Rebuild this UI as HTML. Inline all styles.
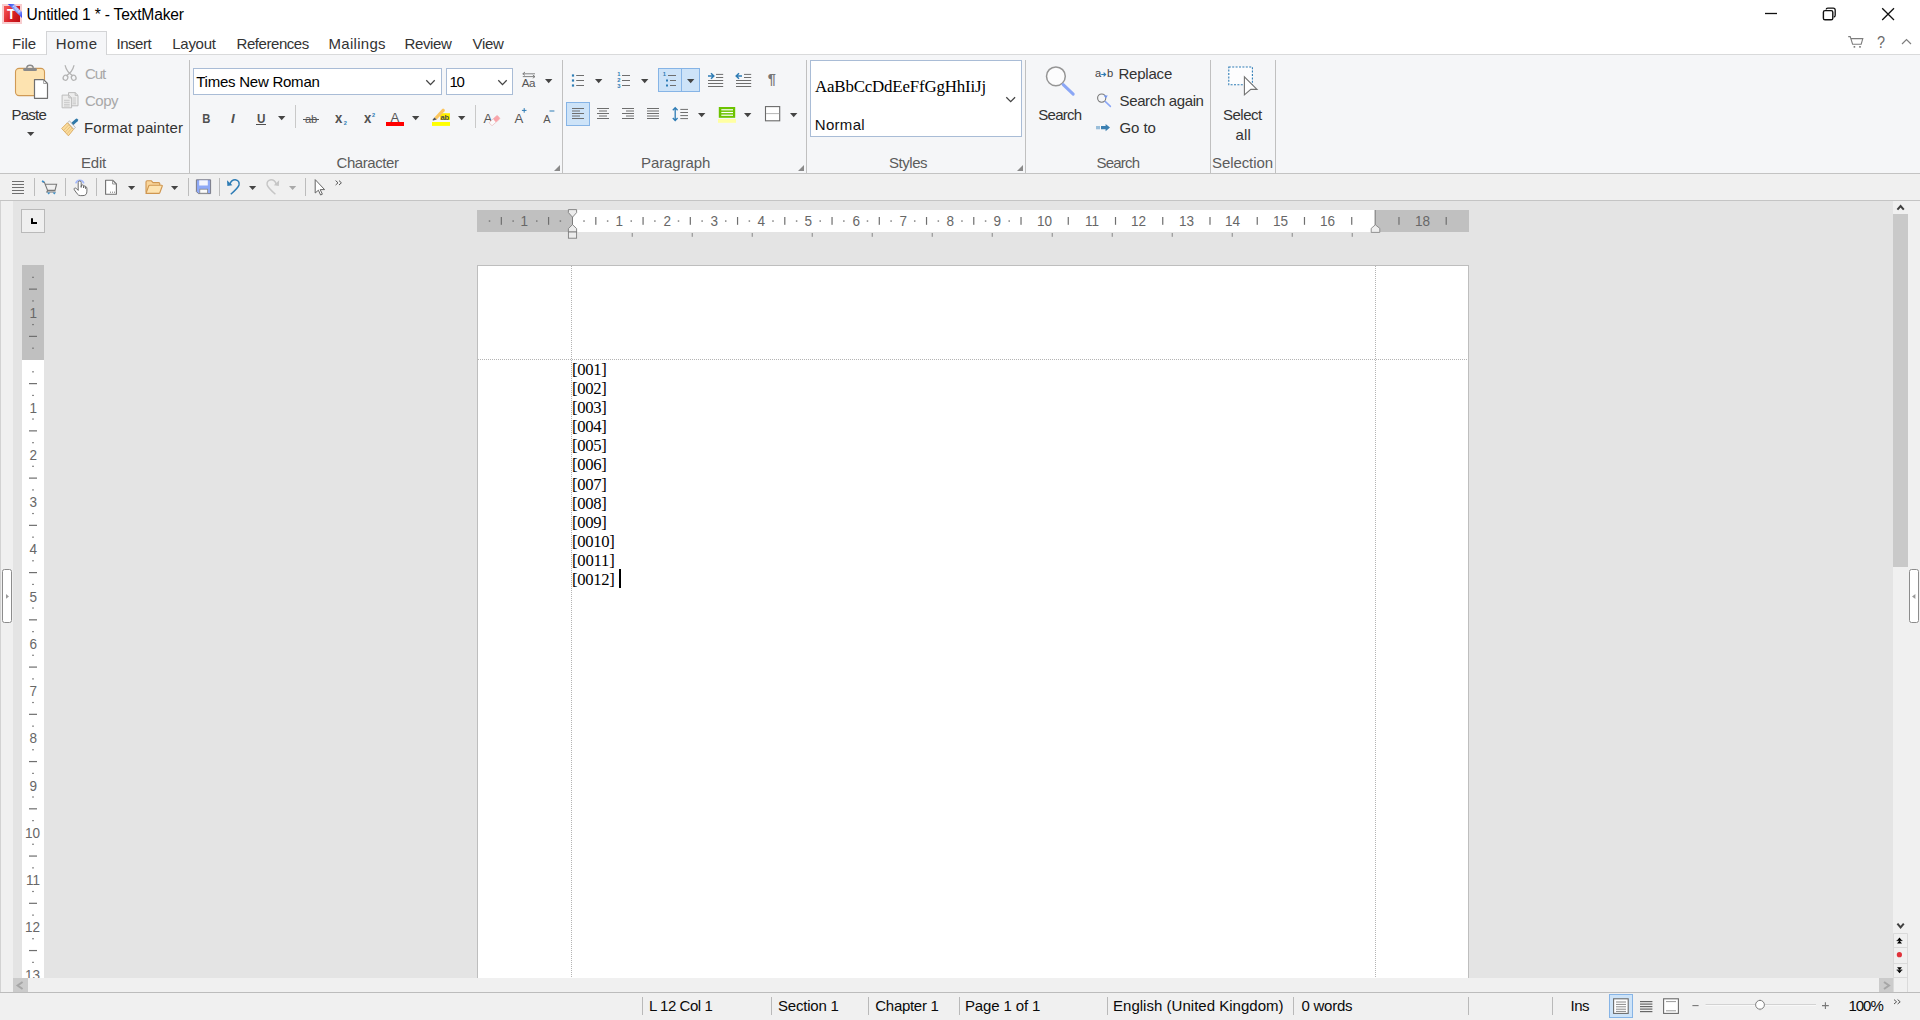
<!DOCTYPE html>
<html lang="en">
<head>
<meta charset="utf-8">
<title>Untitled 1 * - TextMaker</title>
<style>
html,body{margin:0;padding:0;background:#fff;overflow:hidden}
body{width:1920px;height:1020px;font-family:"Liberation Sans",sans-serif;font-size:14.67px;color:#333}
#app{position:relative;width:1920px;height:1020px;overflow:hidden;background:#fff}
#app div,#app svg,#app span,#app p{position:absolute;box-sizing:border-box;margin:0}
#app div{overflow:visible}
.t{line-height:0;white-space:pre;display:block}
.ic{overflow:visible}
.vs{background:#c9c9c9;width:1px}
.hl{background:#cde3f8;border:1px solid #86b4e6}
.combo{background:#fff;border:1px solid #a9bcd6}

</style>
</head>
<body>
<div id="app">
<div id="titlebar" style="left:0px;top:0px;width:1920px;height:31px;background:#fff">
<span class="t" style="left:26.6px;top:15px;font-size:15.6px;color:#000;letter-spacing:-0.194px;">Untitled 1 * - TextMaker</span>
<svg class="ic" style="left:1760px;top:4px" width="24" height="20" viewBox="0 0 24 20"><path d="M5 9.5H17" stroke="#111" stroke-width="1.3" fill="none"/></svg>
<svg class="ic" style="left:1818px;top:4px" width="24" height="20" viewBox="0 0 24 20"><path d="M8.2 5.2V5.6Q8.2 4.2 9.8 4.2H15.2Q17.2 4.2 17.2 6.2V11.2Q17.2 13 15.8 13" stroke="#111" stroke-width="1.3" fill="none"/><rect x="5.4" y="6.6" width="9.4" height="9.2" rx="1.6" stroke="#111" stroke-width="1.4" fill="none"/></svg>
<svg class="ic" style="left:1878px;top:4px" width="24" height="20" viewBox="0 0 24 20"><path d="M4.2 4.2L16 16M16 4.2L4.2 16" stroke="#111" stroke-width="1.3" fill="none"/></svg>
<svg class="ic" style="left:2px;top:4px" width="20" height="20" viewBox="0 0 20 20"><defs><linearGradient id="lgR" x1="0" y1="0.2" x2="1" y2="0.8"><stop offset="0" stop-color="#f55252"/><stop offset="0.55" stop-color="#d82127"/><stop offset="1" stop-color="#c01015"/></linearGradient>
<linearGradient id="lgB" x1="0" y1="0" x2="1" y2="1"><stop offset="0" stop-color="#2234ee"/><stop offset="0.3" stop-color="#7b93f8"/><stop offset="0.7" stop-color="#8aa0f9"/><stop offset="1" stop-color="#1e2df0"/></linearGradient>
<clipPath id="cpI"><rect x="0" y="0" width="20" height="20"/></clipPath></defs>
<rect x="0" y="0" width="20" height="20" fill="#f8cdcf"/><rect x="2" y="2" width="16" height="16" fill="url(#lgR)"/>
<text x="4.9" y="15" font-family="'Liberation Sans', sans-serif" font-weight="700" font-size="13.8" fill="#fff">T</text>
<g clip-path="url(#cpI)"><path d="M5.9 0H11.8L20 7.9V14.1Z" fill="url(#lgB)"/><text transform="translate(10.2 2.4) rotate(44)" font-family="'Liberation Sans', sans-serif" font-weight="700" font-size="3.4" fill="#e6ebff" letter-spacing="0.15">FREE</text></g></svg>
</div>
<div id="menubar" style="left:0px;top:31px;width:1920px;height:24px;background:#fff;border-bottom:1px solid #d9dadb">
<div class="tab-active" style="left:46px;top:0px;width:61px;height:24px;background:#f5f6f8;border:1px solid #d3d4d6;border-bottom:none"></div>
<span class="t" style="left:12px;top:13px;font-size:15.0px;color:#333;letter-spacing:-0.026px;">File</span>
<span class="t" style="left:55.75px;top:13px;font-size:15.0px;color:#333;letter-spacing:0.443px;">Home</span>
<span class="t" style="left:116.5px;top:13px;font-size:15.0px;color:#333;letter-spacing:-0.469px;">Insert</span>
<span class="t" style="left:172.25px;top:13px;font-size:15.0px;color:#333;letter-spacing:-0.274px;">Layout</span>
<span class="t" style="left:236.5px;top:13px;font-size:15.0px;color:#333;letter-spacing:-0.44px;">References</span>
<span class="t" style="left:328.5px;top:13px;font-size:15.0px;color:#333;letter-spacing:0.283px;">Mailings</span>
<span class="t" style="left:404.5px;top:13px;font-size:15.0px;color:#333;letter-spacing:-0.37px;">Review</span>
<span class="t" style="left:472.5px;top:13px;font-size:15.0px;color:#333;letter-spacing:-0.303px;">View</span>
<svg class="ic" style="left:0;top:0" width="1920" height="24" viewBox="0 31 1920 24"><path d="M1848.2 36.6H1850.2L1852.6 44.2H1861.2L1862.8 38.6H1851" fill="none" stroke="#7d7d7d" stroke-width="1.1"/><rect x="1853.6" y="46" width="1.6" height="1.7" fill="#7d7d7d"/><rect x="1859.2" y="46" width="1.6" height="1.7" fill="#7d7d7d"/><path d="M1902 44L1906.5 39.6L1911 44" fill="none" stroke="#7d7d7d" stroke-width="1.2"/></svg>
<span class="t" style="left:1877.4px;top:12px;font-size:16px;color:#6a6a6a;transform:scaleX(.9);transform-origin:1px 0;">?</span>
</div>
<div id="ribbon" style="left:0px;top:55px;width:1920px;height:119px;background:#f5f6f8;border-bottom:1px solid #c3c3c3">
<div style="left:189px;top:4.5px;width:1px;height:113.5px;background:#c0c0c0"></div>
<div style="left:562px;top:4.5px;width:1px;height:113.5px;background:#c0c0c0"></div>
<div style="left:806px;top:4.5px;width:1px;height:113.5px;background:#c0c0c0"></div>
<div style="left:1025px;top:4.5px;width:1px;height:113.5px;background:#c0c0c0"></div>
<div style="left:1210px;top:4.5px;width:1px;height:113.5px;background:#c0c0c0"></div>
<div style="left:1275px;top:4.5px;width:1px;height:113.5px;background:#c0c0c0"></div>
<span class="t" style="left:81px;top:108px;font-size:15.0px;color:#5c5c5c;letter-spacing:-0.227px;">Edit</span>
<span class="t" style="left:336.5px;top:108px;font-size:15.0px;color:#5c5c5c;letter-spacing:-0.421px;">Character</span>
<span class="t" style="left:641px;top:108px;font-size:15.0px;color:#5c5c5c;letter-spacing:-0.088px;">Paragraph</span>
<span class="t" style="left:889px;top:108px;font-size:15.0px;color:#5c5c5c;letter-spacing:-0.469px;">Styles</span>
<span class="t" style="left:1096.4px;top:108px;font-size:15.0px;color:#5c5c5c;letter-spacing:-0.757px;">Search</span>
<span class="t" style="left:1212px;top:108px;font-size:15.0px;color:#5c5c5c;letter-spacing:-0.083px;">Selection</span>
<span class="t" style="left:11.5px;top:60px;font-size:15.0px;color:#333;letter-spacing:-0.754px;">Paste</span>
<span class="t" style="left:85px;top:19px;font-size:15.0px;color:#a8a8a8;letter-spacing:-1.087px;">Cut</span>
<span class="t" style="left:85px;top:46px;font-size:15.0px;color:#a8a8a8;letter-spacing:-0.506px;">Copy</span>
<span class="t" style="left:84px;top:73px;font-size:15.0px;color:#333;letter-spacing:0.112px;">Format painter</span>
<div class="combo" style="left:193px;top:13px;width:249px;height:27px;"></div>
<span class="t" style="left:196.2px;top:27px;font-size:15.0px;color:#000;letter-spacing:-0.238px;">Times New Roman</span>
<div class="combo" style="left:446px;top:13px;width:67px;height:27px;"></div>
<span class="t" style="left:449.5px;top:27px;font-size:15.0px;color:#000;letter-spacing:-1.342px;">10</span>
<div class="combo" style="left:810px;top:5px;width:212px;height:77px;"></div>
<span class="t" style="left:815px;top:32px;font-size:16.9px;color:#000;letter-spacing:-0.18px;font-family:'Liberation Serif', serif;">AaBbCcDdEeFfGgHhIiJj</span>
<span class="t" style="left:814.8px;top:70px;font-size:15.0px;color:#111;letter-spacing:0.299px;">Normal</span>
<span class="t" style="left:1038.3px;top:60px;font-size:15.0px;color:#333;letter-spacing:-0.737px;">Search</span>
<span class="t" style="left:1118.5px;top:19px;font-size:15.0px;color:#333;letter-spacing:-0.215px;">Replace</span>
<span class="t" style="left:1119.5px;top:46px;font-size:15.0px;color:#333;letter-spacing:-0.359px;">Search again</span>
<span class="t" style="left:1119.5px;top:73px;font-size:15.0px;color:#333;letter-spacing:-0.086px;">Go to</span>
<span class="t" style="left:1223px;top:60px;font-size:15.0px;color:#333;letter-spacing:-0.504px;">Select</span>
<span class="t" style="left:1235.4px;top:80px;font-size:15.0px;color:#333;letter-spacing:0.213px;">all</span>
<svg class="ic" style="left:14px;top:8px" width="36" height="38" viewBox="0 0 36 38"><rect x="1.5" y="5.4" width="29" height="27.2" rx="3.6" fill="#fde3b0" stroke="#d09a55" stroke-width="1.1"/>
<path d="M12.6 4.9A3.45 3.3 0 0 1 19.4 4.9" fill="none" stroke="#8a8a8a" stroke-width="1.5"/>
<rect x="9.1" y="4.9" width="13.9" height="3" rx="1.5" fill="#8a8a8a"/>
<path d="M20.5 16.6H29.6L33.5 20.5V35.3H20.5Z" fill="#fff" stroke="#6f6f6f" stroke-width="1.2" stroke-linejoin="round"/>
<path d="M29.6 16.6V20.5H33.5" fill="none" stroke="#9a9a9a" stroke-width="0.9"/></svg>
<svg class="ic" style="left:26.8px;top:76.9px" width="7.4" height="4" viewBox="0 0 7.4 4"><path d="M0 0H7.4L3.7 4Z" fill="#444"/></svg>
<svg class="ic" style="left:61px;top:9px" width="18" height="18" viewBox="0 0 18 18"><g fill="none" stroke="#b3b3b3" stroke-width="1.25" stroke-linecap="round">
<path d="M4.2 1.7C5.2 6 8 9.4 11.4 11.6"/><path d="M12.9 1.7C11.9 6 9.1 9.4 5.7 11.6"/>
<ellipse cx="4.5" cy="13.7" rx="2.3" ry="2.6" transform="rotate(25 4.5 13.7)"/><ellipse cx="12.7" cy="13.7" rx="2.3" ry="2.6" transform="rotate(-25 12.7 13.7)"/></g></svg>
<svg class="ic" style="left:61px;top:36px" width="18" height="18" viewBox="0 0 18 18"><g stroke="#bcbcbc" stroke-width="1" fill="#ededed" stroke-linejoin="round">
<path d="M7.5 1.6H14.2L17 4.4V14.8H7.5Z"/><path d="M14.2 1.6V4.4H17" fill="none"/>
<path d="M1.1 4.1H7.8L10.6 6.9V16.8H1.1Z"/><path d="M7.8 4.1V6.9H10.6" fill="none"/></g>
<g stroke="#c4c4c4" stroke-width="0.9"><path d="M3 9.3H8.7M3 11.3H8.7M3 13.3H8.7M3 15H8.7M11.6 7H15M11.6 9H15M11.6 11H15M11.6 12.8H15"/></g></svg>
<svg class="ic" style="left:60px;top:63px" width="20" height="20" viewBox="0 0 20 20"><path d="M11.6 6.6L16.6 2.2" stroke="#2f78a8" stroke-width="3" stroke-linecap="round"/>
<path d="M7.6 4.7L13.6 11.2L15.4 9.4L9.5 2.9Z" fill="#f4f4f4" stroke="#a9a9a9" stroke-width="0.8"/>
<path d="M1.7 10.5L7.4 4.8L13.5 11.4L8.4 17.8Z" fill="#fbdd9e" stroke="#d8a75c" stroke-width="0.9" stroke-linejoin="round"/>
<path d="M3.6 12.3L8.9 6.7M5.3 14L10.5 8.4M6.9 15.8L12 10.1" stroke="#e2b873" stroke-width="0.8"/></svg>
<svg class="ic" style="left:426px;top:24.6px" width="9" height="5" viewBox="0 0 9 5"><path d="M0.3 0.3L4.5 4.6L8.7 0.3" fill="none" stroke="#444" stroke-width="1.3"/></svg>
<svg class="ic" style="left:497.5px;top:24.6px" width="9" height="5" viewBox="0 0 9 5"><path d="M0.3 0.3L4.5 4.6L8.7 0.3" fill="none" stroke="#444" stroke-width="1.3"/></svg>
<svg class="ic" style="left:521px;top:15px" width="18" height="18" viewBox="0 0 18 18"><path d="M1.8 3.8H14M1.8 3.8L4 2M1.8 3.8L4 5.4" stroke="#777" stroke-width="0.9" fill="none"/>
<path d="M1.8 6.6H14M14 6.6L11.8 5M14 6.6L11.8 8.2" stroke="#777" stroke-width="0.9" fill="none"/>
<text x="0.8" y="16.8" font-family="'Liberation Sans', sans-serif" font-size="11.6" fill="#555" letter-spacing="-0.5">Aa</text></svg>
<svg class="ic" style="left:544.8px;top:24px" width="7.4" height="4.2" viewBox="0 0 7.4 4.2"><path d="M0 0H7.4L3.7 4.2Z" fill="#444"/></svg>
<span class="t" style="left:201.7px;top:64px;font-size:13.4px;color:#505050;font-weight:700;transform:scaleX(.84);transform-origin:1px 0;">B</span>
<span class="t" style="left:231px;top:64px;font-size:13.4px;color:#505050;font-weight:700;font-style:italic;">I</span>
<span class="t" style="left:257px;top:64px;font-size:13px;color:#505050;font-weight:700;transform:scaleX(.9);transform-origin:1px 0;">U</span>
<div style="left:256px;top:68.8px;width:9.8px;height:1.1px;background:#505050"></div>
<svg class="ic" style="left:278px;top:61px" width="7.4" height="4.2" viewBox="0 0 7.4 4.2"><path d="M0 0H7.4L3.7 4.2Z" fill="#444"/></svg>
<div class="vs" style="left:295px;top:50px;width:1px;height:23px;"></div>
<span class="t" style="left:305px;top:64px;font-size:11.2px;color:#555;letter-spacing:-0.222px;">ab</span>
<div style="left:303px;top:64.4px;width:16px;height:1px;background:#555"></div>
<span class="t" style="left:335px;top:63px;font-size:14px;color:#505050;font-weight:700;transform:scaleX(.94);transform-origin:1px 0;">x</span>
<span class="t" style="left:343.8px;top:68px;font-size:5.6px;color:#2e7cb5;font-weight:700;">2</span>
<span class="t" style="left:363.5px;top:63px;font-size:14px;color:#505050;font-weight:700;transform:scaleX(.94);transform-origin:1px 0;">x</span>
<span class="t" style="left:372px;top:60px;font-size:5.6px;color:#2e7cb5;font-weight:700;">2</span>
<span class="t" style="left:390.4px;top:63px;font-size:13.2px;color:#555;">A</span>
<div style="left:386px;top:67px;width:18px;height:4px;background:#f00"></div>
<svg class="ic" style="left:412px;top:61px" width="7.4" height="4.2" viewBox="0 0 7.4 4.2"><path d="M0 0H7.4L3.7 4.2Z" fill="#444"/></svg>
<svg class="ic" style="left:431px;top:52px" width="20" height="20" viewBox="0 0 20 20"><rect x="9" y="6.2" width="10" height="6.8" fill="#ffee00"/>
<path d="M3.4 10.6L11.2 1.9Q12.1 1.1 13 1.9L13.6 2.5Q14.3 3.3 13.5 4.2L5.8 12.6Z" fill="#fcc65e"/>
<path d="M3.4 10.6L5.8 12.6L2.2 13.6L1.4 12.9Z" fill="#555"/>
<text x="9.6" y="12.6" font-family="'Liberation Sans', sans-serif" font-weight="700" font-size="7.6" fill="#4a4a4a" letter-spacing="-0.2">ab</text>
<rect x="1" y="15" width="18" height="3.9" fill="#ffff00"/></svg>
<svg class="ic" style="left:458px;top:61px" width="7.4" height="4.2" viewBox="0 0 7.4 4.2"><path d="M0 0H7.4L3.7 4.2Z" fill="#444"/></svg>
<div class="vs" style="left:475px;top:50px;width:1px;height:23px;"></div>
<span class="t" style="left:483.6px;top:64px;font-size:13.2px;color:#555;">A</span>
<svg class="ic" style="left:487px;top:58px" width="14" height="14" viewBox="0 0 14 14"><g transform="rotate(-42 7.5 7.5)"><rect x="2" y="5.4" width="11" height="4.4" rx="0.8" fill="#fbfbfb" stroke="#e7b3b6" stroke-width="0.6"/><rect x="7.4" y="5.4" width="5.6" height="4.4" rx="0.8" fill="#f9a4aa"/></g></svg>
<span class="t" style="left:514.5px;top:64px;font-size:13.2px;color:#555;">A</span>
<svg class="ic" style="left:520.6px;top:52.2px" width="7" height="7" viewBox="0 0 7 7"><path d="M0.9 3.4H5.5M3.2 1.1V5.7" stroke="#2e7cb5" stroke-width="1"/></svg>
<span class="t" style="left:543.2px;top:64px;font-size:11px;color:#555;">A</span>
<svg class="ic" style="left:548.6px;top:54.4px" width="6" height="4" viewBox="0 0 6 4"><path d="M0.5 2H5.4" stroke="#2e7cb5" stroke-width="1"/></svg>
<svg class="ic" style="left:554px;top:110px" width="6" height="6" viewBox="0 0 6 6"><path d="M6 0V6H0Z" fill="#8a8a8a"/></svg>
<svg class="ic" style="left:798px;top:110px" width="6" height="6" viewBox="0 0 6 6"><path d="M6 0V6H0Z" fill="#8a8a8a"/></svg>
<svg class="ic" style="left:1017px;top:110px" width="6" height="6" viewBox="0 0 6 6"><path d="M6 0V6H0Z" fill="#8a8a8a"/></svg>
<svg class="ic" style="left:0;top:0" width="1920" height="119" viewBox="0 55 1920 119"><rect x="571.9" y="74.4" width="2.2" height="2.2" fill="#2e7cb5"/><rect x="571.9" y="79.4" width="2.2" height="2.2" fill="#2e7cb5"/><rect x="571.9" y="84.4" width="2.2" height="2.2" fill="#2e7cb5"/><path d="M576.2 75.5H584" stroke="#6e6e6e" stroke-width="1"/><path d="M576.2 80.5H584" stroke="#6e6e6e" stroke-width="1"/><path d="M576.2 85.5H584" stroke="#6e6e6e" stroke-width="1"/><path d="M622 75.5H630" stroke="#6e6e6e" stroke-width="1"/><path d="M622 80.5H630" stroke="#6e6e6e" stroke-width="1"/><path d="M622 85.5H630" stroke="#6e6e6e" stroke-width="1"/></svg>
<span class="t" style="left:617.2px;top:19px;font-size:5.8px;color:#2e7cb5;font-weight:700;">1</span>
<span class="t" style="left:617.2px;top:25px;font-size:5.8px;color:#2e7cb5;font-weight:700;">2</span>
<span class="t" style="left:617.2px;top:31px;font-size:5.8px;color:#2e7cb5;font-weight:700;">3</span>
<svg class="ic" style="left:594.8px;top:23.8px" width="7.4" height="4.2" viewBox="0 0 7.4 4.2"><path d="M0 0H7.4L3.7 4.2Z" fill="#444"/></svg>
<svg class="ic" style="left:641px;top:23.8px" width="7.4" height="4.2" viewBox="0 0 7.4 4.2"><path d="M0 0H7.4L3.7 4.2Z" fill="#444"/></svg>
<div class="hl" style="left:658px;top:13px;width:42px;height:24.4px;"></div>
<div style="left:681px;top:13px;width:1px;height:24.4px;background:#86b4e6"></div>
<svg class="ic" style="left:0;top:0" width="1920" height="119" viewBox="0 55 1920 119"><path d="M668 75.5H676" stroke="#6e6e6e" stroke-width="1"/><path d="M670 80.5H676" stroke="#6e6e6e" stroke-width="1"/><path d="M670 85.5H676" stroke="#6e6e6e" stroke-width="1"/><rect x="666" y="79.5" width="2" height="2" fill="#2e7cb5"/><rect x="666" y="84.5" width="2" height="2" fill="#2e7cb5"/></svg>
<span class="t" style="left:662.8px;top:19px;font-size:5.8px;color:#2e7cb5;font-weight:700;">1</span>
<svg class="ic" style="left:686.7px;top:23.8px" width="7.4" height="4.2" viewBox="0 0 7.4 4.2"><path d="M0 0H7.4L3.7 4.2Z" fill="#444"/></svg>
<svg class="ic" style="left:0;top:0" width="1920" height="119" viewBox="0 55 1920 119"><path d="M716 74.4H723.2" stroke="#6e6e6e" stroke-width="1"/><path d="M716 77.5H723.2" stroke="#6e6e6e" stroke-width="1"/><path d="M708 80.5H723.2" stroke="#6e6e6e" stroke-width="1"/><path d="M708 83.5H723.2" stroke="#6e6e6e" stroke-width="1"/><path d="M708 86.5H723.2" stroke="#6e6e6e" stroke-width="1"/><path d="M708 76H713.6M711 73.3L713.8 76L711 78.7" stroke="#2e7cb5" stroke-width="1.5" fill="none"/><path d="M744 74.4H751.2" stroke="#6e6e6e" stroke-width="1"/><path d="M744 77.5H751.2" stroke="#6e6e6e" stroke-width="1"/><path d="M736 80.5H751.2" stroke="#6e6e6e" stroke-width="1"/><path d="M736 83.5H751.2" stroke="#6e6e6e" stroke-width="1"/><path d="M736 86.5H751.2" stroke="#6e6e6e" stroke-width="1"/><path d="M742 76H736.4M739 73.3L736.2 76L739 78.7" stroke="#2e7cb5" stroke-width="1.5" fill="none"/></svg>
<span class="t" style="left:767.8px;top:24px;font-size:14.6px;color:#777;font-weight:700;">¶</span>
<div class="hl" style="left:566px;top:47px;width:24.4px;height:23.8px;"></div>
<svg class="ic" style="left:0;top:0" width="1920" height="119" viewBox="0 55 1920 119"><path d="M572 108.5H584" stroke="#6e6e6e" stroke-width="1"/><path d="M572 111H580" stroke="#6e6e6e" stroke-width="1"/><path d="M572 113.5H584" stroke="#6e6e6e" stroke-width="1"/><path d="M572 116H580" stroke="#6e6e6e" stroke-width="1"/><path d="M572 118.5H584" stroke="#6e6e6e" stroke-width="1"/><path d="M597 108.5H609" stroke="#6e6e6e" stroke-width="1"/><path d="M599 111H607" stroke="#6e6e6e" stroke-width="1"/><path d="M597 113.5H609" stroke="#6e6e6e" stroke-width="1"/><path d="M599 116H607" stroke="#6e6e6e" stroke-width="1"/><path d="M597 118.5H609" stroke="#6e6e6e" stroke-width="1"/><path d="M622 108.5H634" stroke="#6e6e6e" stroke-width="1"/><path d="M626 111H634" stroke="#6e6e6e" stroke-width="1"/><path d="M622 113.5H634" stroke="#6e6e6e" stroke-width="1"/><path d="M626 116H634" stroke="#6e6e6e" stroke-width="1"/><path d="M622 118.5H634" stroke="#6e6e6e" stroke-width="1"/><path d="M647 108.5H659" stroke="#6e6e6e" stroke-width="1"/><path d="M647 111H659" stroke="#6e6e6e" stroke-width="1"/><path d="M647 113.5H659" stroke="#6e6e6e" stroke-width="1"/><path d="M647 116H659" stroke="#6e6e6e" stroke-width="1"/><path d="M647 118.5H659" stroke="#6e6e6e" stroke-width="1"/><path d="M680.3 109.4H688" stroke="#6e6e6e" stroke-width="1"/><path d="M680.3 112.5H688" stroke="#6e6e6e" stroke-width="1"/><path d="M680.3 115.6H688" stroke="#6e6e6e" stroke-width="1"/><path d="M680.3 118.6H688" stroke="#6e6e6e" stroke-width="1"/><path d="M675.2 108V120.2M672.8 110.2L675.2 107.6L677.6 110.2M672.8 118L675.2 120.6L677.6 118" stroke="#2e7cb5" stroke-width="1.3" fill="none"/><rect x="718.8" y="107" width="16.4" height="10.8" fill="#6cc300"/><path d="M721.3 109.8H733" stroke="#fff" stroke-width="1.2"/><path d="M721.3 112.5H733" stroke="#fff" stroke-width="1.2"/><path d="M721.3 115.2H733" stroke="#fff" stroke-width="1.2"/><rect x="718" y="119" width="18" height="3.8" fill="#ffffa2"/><rect x="765.5" y="106.6" width="14.2" height="14.2" fill="#fff" stroke="#6a6a6a" stroke-width="1.1"/><path d="M766 113.6H779.2" stroke="#b5b5b5" stroke-width="1"/></svg>
<svg class="ic" style="left:697.8px;top:57.8px" width="7.4" height="4.2" viewBox="0 0 7.4 4.2"><path d="M0 0H7.4L3.7 4.2Z" fill="#444"/></svg>
<svg class="ic" style="left:743.8px;top:57.8px" width="7.4" height="4.2" viewBox="0 0 7.4 4.2"><path d="M0 0H7.4L3.7 4.2Z" fill="#444"/></svg>
<svg class="ic" style="left:789.8px;top:57.8px" width="7.4" height="4.2" viewBox="0 0 7.4 4.2"><path d="M0 0H7.4L3.7 4.2Z" fill="#444"/></svg>
<svg class="ic" style="left:1006px;top:41.6px" width="9.4" height="5" viewBox="0 0 9.4 5"><path d="M0.3 0.3L4.7 4.6L9.1 0.3" fill="none" stroke="#444" stroke-width="1.3"/></svg>
<svg class="ic" style="left:0;top:0" width="1920" height="119" viewBox="0 55 1920 119"><circle cx="1055.9" cy="76.3" r="9.4" fill="#fcfcfd" stroke="#959595" stroke-width="1.5"/><path d="M1063.2 84.6L1073.2 94.2" stroke="#8ba7f6" stroke-width="3" stroke-linecap="round"/><path d="M1101.2 74.5H1105M1103.6 72.6L1105.6 74.5L1103.6 76.4" stroke="#2e7cb5" stroke-width="1.2" fill="none"/><circle cx="1101.7" cy="98.1" r="4.1" fill="none" stroke="#7a7a7a" stroke-width="1.1"/><path d="M1105.4 101.6L1110.4 106.4" stroke="#8ba7f6" stroke-width="1.5" stroke-linecap="round"/><path d="M1103.6 95.6H1107.8L1105.9 98.3Z" fill="#6f93f0"/><path d="M1097 126V129.3M1099 126V129.3" stroke="#2e7cb5" stroke-width="0.9"/><path d="M1101 126H1105.6V123.9L1110 127.6L1105.6 131.3V129.3H1101Z" fill="#3b80b2"/><rect x="1228.8" y="67" width="23.6" height="17.8" fill="#fdfdfe" stroke="#2e7cb5" stroke-width="1.1" stroke-dasharray="2 1.4"/><path d="M1244.4 76.8V94.8L1250.8 89.4H1257Z" fill="#fff" stroke="#727272" stroke-width="1.1" stroke-linejoin="miter"/></svg>
<span class="t" style="left:1095.1px;top:18px;font-size:11.2px;color:#444;">a</span>
<span class="t" style="left:1107px;top:18px;font-size:11.2px;color:#444;">b</span>
</div>
<div id="quickbar" style="left:0px;top:174px;width:1920px;height:27px;background:#f0f0f0;border-bottom:1px solid #c4c4c4">
<div style="left:34px;top:4px;width:1px;height:18px;background:#bcbcbc"></div>
<div style="left:65px;top:4px;width:1px;height:18px;background:#bcbcbc"></div>
<div style="left:96px;top:4px;width:1px;height:18px;background:#bcbcbc"></div>
<div style="left:188px;top:4px;width:1px;height:18px;background:#bcbcbc"></div>
<div style="left:219px;top:4px;width:1px;height:18px;background:#bcbcbc"></div>
<div style="left:305px;top:4px;width:1px;height:18px;background:#bcbcbc"></div>
<svg class="ic" style="left:0;top:0" width="1920" height="27" viewBox="0 174 1920 27"><path d="M12 181.5H24" stroke="#6f6f6f" stroke-width="1"/><path d="M12 184.5H24" stroke="#6f6f6f" stroke-width="1"/><path d="M12 187.5H24" stroke="#6f6f6f" stroke-width="1"/><path d="M12 190.5H24" stroke="#6f6f6f" stroke-width="1"/><path d="M12 193.5H24" stroke="#6f6f6f" stroke-width="1"/><path d="M42 181.4L44.4 182.4L47.6 190.4H55L56.6 184.2H45.4M47.6 190.4L46.8 192H55.6" fill="none" stroke="#777" stroke-width="1.1"/><path d="M42 181L44.2 182" stroke="#3a8ec9" stroke-width="1.4"/><path d="M47 192.6H50.4L48.7 194.6Z" fill="#3a8ec9"/><path d="M52.6 192.6H56L54.3 194.6Z" fill="#3a8ec9"/><path d="M75.8 183.4A4.1 4.1 0 0 1 83.8 183.4" fill="none" stroke="#a3b8fb" stroke-width="1.6"/><path d="M78.2 190.4V182.6Q78.2 181 79.7 181Q81.2 181 81.2 182.6V187.4V186.2Q81.2 184.9 82.5 184.9Q83.6 184.9 83.6 186.2V188V187Q83.6 185.9 84.7 185.9Q85.6 185.9 85.6 187V188.6Q85.6 187.2 86.3 187.2Q86.9 187.2 86.9 188.4V191.2Q86.9 195.6 83 195.6H80.4Q78.4 195.6 77.2 193.8L74.3 189.8Q73.7 188.6 74.7 188.1Q75.7 187.8 76.6 188.7Z" fill="#fff" stroke="#5f5f5f" stroke-width="0.9" stroke-linejoin="round"/><path d="M105.6 180.2H112.6L116.4 184V194.3H105.6Z" fill="#fff" stroke="#6f6f6f" stroke-width="1.1" stroke-linejoin="round"/><path d="M112.6 180.2V184H116.4" fill="none" stroke="#8a8a8a" stroke-width="0.9"/><path d="M110 192.2H110.9M112 192.2H112.9M114 192.2H114.9" stroke="#555" stroke-width="0.9"/><path d="M146 192.6V182Q146 180.8 147.2 180.8H151.4L153 182.6H158.6Q159.8 182.6 159.8 183.8V185.4" fill="#f9d59a" stroke="#cf9650" stroke-width="1.1" stroke-linejoin="round"/><path d="M146 193.4L148.8 185.8Q149.1 185.2 149.8 185.2H161.6Q162.6 185.2 162.2 186.2L159.8 192.8Q159.6 193.4 158.8 193.4Z" fill="#fde3b0" stroke="#cf9650" stroke-width="1.1" stroke-linejoin="round"/><path d="M196.4 179.8H210.6V193.6H198.4L196.4 191.6Z" fill="#8ea9f7" stroke="#7c7c86" stroke-width="1"/><rect x="199.2" y="180.3" width="8.6" height="5.2" fill="#f4f6fd"/><rect x="199.8" y="189.2" width="7.8" height="4" fill="#fafafa" stroke="#8a8a8a" stroke-width="0.8"/><path d="M229.8 184.4Q231.4 179.7 235.2 179.8Q239.8 180.4 239 185Q238.2 187.8 230.8 194.2" fill="none" stroke="#2e7cb5" stroke-width="1.5"/><path d="M227 180.3L227.4 186L232.4 185.3Z" fill="#2e7cb5"/><path d="M276.4 184.4Q274.8 179.7 271 179.8Q266.4 180.4 267.2 185Q268 187.8 275.4 194.2" fill="none" stroke="#c6c6c6" stroke-width="1.5"/><path d="M279.2 180.3L278.8 186L273.8 185.3Z" fill="#c6c6c6"/><path d="M315.2 179.6V193L318.4 190.2L320.6 195L322.4 194.2L320.2 189.6H324.6Z" fill="#fff" stroke="#666" stroke-width="1" stroke-linejoin="round"/><path d="M335.6 180.6L338 182.8L335.6 185M339 180.6L341.4 182.8L339 185" fill="none" stroke="#555" stroke-width="1"/></svg>
<svg class="ic" style="left:127.8px;top:12px" width="7.2" height="4.1" viewBox="0 0 7.2 4.1"><path d="M0 0H7.2L3.6 4.1Z" fill="#444"/></svg>
<svg class="ic" style="left:171px;top:12px" width="7.2" height="4.1" viewBox="0 0 7.2 4.1"><path d="M0 0H7.2L3.6 4.1Z" fill="#444"/></svg>
<svg class="ic" style="left:249.2px;top:12px" width="7.2" height="4.1" viewBox="0 0 7.2 4.1"><path d="M0 0H7.2L3.6 4.1Z" fill="#444"/></svg>
<svg class="ic" style="left:289px;top:12px" width="7.2" height="4.1" viewBox="0 0 7.2 4.1"><path d="M0 0H7.2L3.6 4.1Z" fill="#a9a9a9"/></svg>
</div>
<div id="workspace" style="left:0px;top:201px;width:1920px;height:777px;background:#e4e4e4;overflow:hidden">
<div style="left:0px;top:0px;width:13px;height:791px;background:#f0f0f0"></div>
<div style="left:0px;top:0px;width:1px;height:791px;background:#d2d2d2"></div>
<div style="left:1893px;top:0px;width:27px;height:777px;background:#f0f0f0"></div>
<div style="left:21px;top:8px;width:24px;height:24px;background:#efefef;border:1px solid #b9b9b9"></div>
<svg class="ic" style="left:21px;top:8px" width="24" height="24" viewBox="0 0 24 24"><path d="M11 9.2V14H16" stroke="#000" stroke-width="2" fill="none"/></svg>
<div class="hruler" style="left:477px;top:9px;width:992px;height:22px;background:#fff"></div>
<div style="left:477px;top:9px;width:95.5px;height:22px;background:#c0c0c0"></div>
<div style="left:1375px;top:9px;width:94px;height:22px;background:#c0c0c0"></div>
<div class="vruler" style="left:22px;top:64px;width:22px;height:713px;background:#fff"></div>
<div style="left:22px;top:64px;width:22px;height:95px;background:#c0c0c0"></div>
<div class="page" style="left:477px;top:64px;width:992px;height:720px;background:#fff;border:1px solid #bebebe"></div>
<svg class="ic" style="left:0;top:0" width="1920" height="777" viewBox="0 201 1920 777"><rect x="488.77" y="220.4" width="1.5" height="1.3" fill="#6f6f6f"/><rect x="500.73" y="217" width="1.2" height="7.8" fill="#6f6f6f"/><rect x="512.4" y="220.4" width="1.5" height="1.3" fill="#6f6f6f"/><rect x="536.02" y="220.4" width="1.5" height="1.3" fill="#6f6f6f"/><rect x="547.98" y="217" width="1.2" height="7.8" fill="#6f6f6f"/><rect x="559.64" y="220.4" width="1.5" height="1.3" fill="#6f6f6f"/><rect x="583.26" y="220.4" width="1.5" height="1.3" fill="#6f6f6f"/><rect x="595.22" y="217" width="1.2" height="7.8" fill="#6f6f6f"/><rect x="606.88" y="220.4" width="1.5" height="1.3" fill="#6f6f6f"/><rect x="630.5" y="220.4" width="1.5" height="1.3" fill="#6f6f6f"/><rect x="642.47" y="217" width="1.2" height="7.8" fill="#6f6f6f"/><rect x="654.13" y="220.4" width="1.5" height="1.3" fill="#6f6f6f"/><rect x="677.75" y="220.4" width="1.5" height="1.3" fill="#6f6f6f"/><rect x="689.71" y="217" width="1.2" height="7.8" fill="#6f6f6f"/><rect x="701.37" y="220.4" width="1.5" height="1.3" fill="#6f6f6f"/><rect x="724.99" y="220.4" width="1.5" height="1.3" fill="#6f6f6f"/><rect x="736.95" y="217" width="1.2" height="7.8" fill="#6f6f6f"/><rect x="748.62" y="220.4" width="1.5" height="1.3" fill="#6f6f6f"/><rect x="772.24" y="220.4" width="1.5" height="1.3" fill="#6f6f6f"/><rect x="784.2" y="217" width="1.2" height="7.8" fill="#6f6f6f"/><rect x="795.86" y="220.4" width="1.5" height="1.3" fill="#6f6f6f"/><rect x="819.48" y="220.4" width="1.5" height="1.3" fill="#6f6f6f"/><rect x="831.44" y="217" width="1.2" height="7.8" fill="#6f6f6f"/><rect x="843.1" y="220.4" width="1.5" height="1.3" fill="#6f6f6f"/><rect x="866.73" y="220.4" width="1.5" height="1.3" fill="#6f6f6f"/><rect x="878.69" y="217" width="1.2" height="7.8" fill="#6f6f6f"/><rect x="890.35" y="220.4" width="1.5" height="1.3" fill="#6f6f6f"/><rect x="913.97" y="220.4" width="1.5" height="1.3" fill="#6f6f6f"/><rect x="925.93" y="217" width="1.2" height="7.8" fill="#6f6f6f"/><rect x="937.59" y="220.4" width="1.5" height="1.3" fill="#6f6f6f"/><rect x="961.21" y="220.4" width="1.5" height="1.3" fill="#6f6f6f"/><rect x="973.17" y="217" width="1.2" height="7.8" fill="#6f6f6f"/><rect x="984.84" y="220.4" width="1.5" height="1.3" fill="#6f6f6f"/><rect x="1008.46" y="220.4" width="1.5" height="1.3" fill="#6f6f6f"/><rect x="1020.42" y="217" width="1.2" height="7.8" fill="#6f6f6f"/><rect x="1067.66" y="217" width="1.2" height="7.8" fill="#6f6f6f"/><rect x="1114.91" y="217" width="1.2" height="7.8" fill="#6f6f6f"/><rect x="1162.15" y="217" width="1.2" height="7.8" fill="#6f6f6f"/><rect x="1209.39" y="217" width="1.2" height="7.8" fill="#6f6f6f"/><rect x="1256.64" y="217" width="1.2" height="7.8" fill="#6f6f6f"/><rect x="1303.88" y="217" width="1.2" height="7.8" fill="#6f6f6f"/><rect x="1351.13" y="217" width="1.2" height="7.8" fill="#6f6f6f"/><rect x="1398.37" y="217" width="1.2" height="7.8" fill="#6f6f6f"/><rect x="1445.61" y="217" width="1.2" height="7.8" fill="#6f6f6f"/><rect x="631.7" y="233" width="1.1" height="3.8" fill="#8f8f8f"/><rect x="691.7" y="233" width="1.1" height="3.8" fill="#8f8f8f"/><rect x="751.7" y="233" width="1.1" height="3.8" fill="#8f8f8f"/><rect x="811.7" y="233" width="1.1" height="3.8" fill="#8f8f8f"/><rect x="871.7" y="233" width="1.1" height="3.8" fill="#8f8f8f"/><rect x="931.7" y="233" width="1.1" height="3.8" fill="#8f8f8f"/><rect x="991.7" y="233" width="1.1" height="3.8" fill="#8f8f8f"/><rect x="1051.7" y="233" width="1.1" height="3.8" fill="#8f8f8f"/><rect x="1111.7" y="233" width="1.1" height="3.8" fill="#8f8f8f"/><rect x="1171.7" y="233" width="1.1" height="3.8" fill="#8f8f8f"/><rect x="1231.7" y="233" width="1.1" height="3.8" fill="#8f8f8f"/><rect x="1291.7" y="233" width="1.1" height="3.8" fill="#8f8f8f"/><rect x="1351.7" y="233" width="1.1" height="3.8" fill="#8f8f8f"/><rect x="1374.6" y="210" width="1.1" height="15" fill="#808080"/><path d="M568.4 209.6H576.6V212.6L572.5 217.2L568.4 212.6Z" fill="#ececec" stroke="#7d7d7d" stroke-width="0.9"/><path d="M572.5 217V225" stroke="#7d7d7d" stroke-width="1"/><path d="M568.4 232V228.6L572.5 224.6L576.6 228.6V232Z" fill="#ececec" stroke="#7d7d7d" stroke-width="0.9"/><rect x="568.4" y="232" width="8.2" height="6.2" fill="#ececec" stroke="#7d7d7d" stroke-width="0.9"/><path d="M1371.2 232.4V228.4L1375.4 224.8L1379.8 228.4V232.4Z" fill="#efefef" stroke="#868686" stroke-width="0.9"/></svg>
<span class="t" style="left:614.94px;top:20px;font-size:15.4px;color:#676767;transform:scaleX(.88);transform-origin:50% 50%;">1</span>
<span class="t" style="left:662.69px;top:20px;font-size:15.4px;color:#676767;transform:scaleX(.88);transform-origin:50% 50%;">2</span>
<span class="t" style="left:709.93px;top:20px;font-size:15.4px;color:#676767;transform:scaleX(.88);transform-origin:50% 50%;">3</span>
<span class="t" style="left:756.68px;top:20px;font-size:15.4px;color:#676767;transform:scaleX(.88);transform-origin:50% 50%;">4</span>
<span class="t" style="left:804.42px;top:20px;font-size:15.4px;color:#676767;transform:scaleX(.88);transform-origin:50% 50%;">5</span>
<span class="t" style="left:851.66px;top:20px;font-size:15.4px;color:#676767;transform:scaleX(.88);transform-origin:50% 50%;">6</span>
<span class="t" style="left:898.91px;top:20px;font-size:15.4px;color:#676767;transform:scaleX(.88);transform-origin:50% 50%;">7</span>
<span class="t" style="left:946.15px;top:20px;font-size:15.4px;color:#676767;transform:scaleX(.88);transform-origin:50% 50%;">8</span>
<span class="t" style="left:993.4px;top:20px;font-size:15.4px;color:#676767;transform:scaleX(.88);transform-origin:50% 50%;">9</span>
<span class="t" style="left:1035.86px;top:20px;font-size:15.4px;color:#676767;transform:scaleX(.88);transform-origin:50% 50%;">10</span>
<span class="t" style="left:1083.67px;top:20px;font-size:15.4px;color:#676767;transform:scaleX(.88);transform-origin:50% 50%;">11</span>
<span class="t" style="left:1130.35px;top:20px;font-size:15.4px;color:#676767;transform:scaleX(.88);transform-origin:50% 50%;">12</span>
<span class="t" style="left:1177.59px;top:20px;font-size:15.4px;color:#676767;transform:scaleX(.88);transform-origin:50% 50%;">13</span>
<span class="t" style="left:1224.34px;top:20px;font-size:15.4px;color:#676767;transform:scaleX(.88);transform-origin:50% 50%;">14</span>
<span class="t" style="left:1272.08px;top:20px;font-size:15.4px;color:#676767;transform:scaleX(.88);transform-origin:50% 50%;">15</span>
<span class="t" style="left:1319.32px;top:20px;font-size:15.4px;color:#676767;transform:scaleX(.88);transform-origin:50% 50%;">16</span>
<span class="t" style="left:1413.81px;top:20px;font-size:15.4px;color:#676767;transform:scaleX(.88);transform-origin:50% 50%;">18</span>
<span class="t" style="left:520.46px;top:20px;font-size:15.4px;color:#676767;transform:scaleX(.88);transform-origin:50% 50%;">1</span>
<svg class="ic" style="left:0;top:0" width="1920" height="777" viewBox="0 201 1920 777"><rect x="32.2" y="276.72" width="1.6" height="1.2" fill="#6f6f6f"/><rect x="29" y="288.53" width="8" height="1.2" fill="#6f6f6f"/><rect x="32.2" y="300.34" width="1.6" height="1.2" fill="#6f6f6f"/><rect x="32.2" y="323.97" width="1.6" height="1.2" fill="#6f6f6f"/><rect x="29" y="335.78" width="8" height="1.2" fill="#6f6f6f"/><rect x="32.2" y="347.59" width="1.6" height="1.2" fill="#6f6f6f"/><rect x="32.2" y="371.21" width="1.6" height="1.2" fill="#6f6f6f"/><rect x="29" y="383.02" width="8" height="1.2" fill="#6f6f6f"/><rect x="32.2" y="394.83" width="1.6" height="1.2" fill="#6f6f6f"/><rect x="32.2" y="418.45" width="1.6" height="1.2" fill="#6f6f6f"/><rect x="29" y="430.27" width="8" height="1.2" fill="#6f6f6f"/><rect x="32.2" y="442.08" width="1.6" height="1.2" fill="#6f6f6f"/><rect x="32.2" y="465.7" width="1.6" height="1.2" fill="#6f6f6f"/><rect x="29" y="477.51" width="8" height="1.2" fill="#6f6f6f"/><rect x="32.2" y="489.32" width="1.6" height="1.2" fill="#6f6f6f"/><rect x="32.2" y="512.94" width="1.6" height="1.2" fill="#6f6f6f"/><rect x="29" y="524.75" width="8" height="1.2" fill="#6f6f6f"/><rect x="32.2" y="536.56" width="1.6" height="1.2" fill="#6f6f6f"/><rect x="32.2" y="560.19" width="1.6" height="1.2" fill="#6f6f6f"/><rect x="29" y="572" width="8" height="1.2" fill="#6f6f6f"/><rect x="32.2" y="583.81" width="1.6" height="1.2" fill="#6f6f6f"/><rect x="32.2" y="607.43" width="1.6" height="1.2" fill="#6f6f6f"/><rect x="29" y="619.24" width="8" height="1.2" fill="#6f6f6f"/><rect x="32.2" y="631.05" width="1.6" height="1.2" fill="#6f6f6f"/><rect x="32.2" y="654.67" width="1.6" height="1.2" fill="#6f6f6f"/><rect x="29" y="666.49" width="8" height="1.2" fill="#6f6f6f"/><rect x="32.2" y="678.3" width="1.6" height="1.2" fill="#6f6f6f"/><rect x="32.2" y="701.92" width="1.6" height="1.2" fill="#6f6f6f"/><rect x="29" y="713.73" width="8" height="1.2" fill="#6f6f6f"/><rect x="32.2" y="725.54" width="1.6" height="1.2" fill="#6f6f6f"/><rect x="32.2" y="749.16" width="1.6" height="1.2" fill="#6f6f6f"/><rect x="29" y="760.97" width="8" height="1.2" fill="#6f6f6f"/><rect x="32.2" y="772.78" width="1.6" height="1.2" fill="#6f6f6f"/><rect x="32.2" y="796.41" width="1.6" height="1.2" fill="#6f6f6f"/><rect x="29" y="808.22" width="8" height="1.2" fill="#6f6f6f"/><rect x="32.2" y="820.03" width="1.6" height="1.2" fill="#6f6f6f"/><rect x="32.2" y="843.65" width="1.6" height="1.2" fill="#6f6f6f"/><rect x="29" y="855.46" width="8" height="1.2" fill="#6f6f6f"/><rect x="32.2" y="867.27" width="1.6" height="1.2" fill="#6f6f6f"/><rect x="32.2" y="890.89" width="1.6" height="1.2" fill="#6f6f6f"/><rect x="29" y="902.71" width="8" height="1.2" fill="#6f6f6f"/><rect x="32.2" y="914.52" width="1.6" height="1.2" fill="#6f6f6f"/><rect x="32.2" y="938.14" width="1.6" height="1.2" fill="#6f6f6f"/><rect x="29" y="949.95" width="8" height="1.2" fill="#6f6f6f"/><rect x="32.2" y="961.76" width="1.6" height="1.2" fill="#6f6f6f"/></svg>
<span class="t" style="left:28.5px;top:207px;font-size:15.4px;color:#676767;transform:scaleX(.88);transform-origin:50% 50%;">1</span>
<span class="t" style="left:29px;top:254px;font-size:15.4px;color:#676767;transform:scaleX(.88);transform-origin:50% 50%;">2</span>
<span class="t" style="left:29px;top:301px;font-size:15.4px;color:#676767;transform:scaleX(.88);transform-origin:50% 50%;">3</span>
<span class="t" style="left:28.5px;top:348px;font-size:15.4px;color:#676767;transform:scaleX(.88);transform-origin:50% 50%;">4</span>
<span class="t" style="left:29px;top:396px;font-size:15.4px;color:#676767;transform:scaleX(.88);transform-origin:50% 50%;">5</span>
<span class="t" style="left:29px;top:443px;font-size:15.4px;color:#676767;transform:scaleX(.88);transform-origin:50% 50%;">6</span>
<span class="t" style="left:29px;top:490px;font-size:15.4px;color:#676767;transform:scaleX(.88);transform-origin:50% 50%;">7</span>
<span class="t" style="left:29px;top:537px;font-size:15.4px;color:#676767;transform:scaleX(.88);transform-origin:50% 50%;">8</span>
<span class="t" style="left:29px;top:585px;font-size:15.4px;color:#676767;transform:scaleX(.88);transform-origin:50% 50%;">9</span>
<span class="t" style="left:24.22px;top:632px;font-size:15.4px;color:#676767;transform:scaleX(.88);transform-origin:50% 50%;">10</span>
<span class="t" style="left:24.79px;top:679px;font-size:15.4px;color:#676767;transform:scaleX(.88);transform-origin:50% 50%;">11</span>
<span class="t" style="left:24.22px;top:726px;font-size:15.4px;color:#676767;transform:scaleX(.88);transform-origin:50% 50%;">12</span>
<span class="t" style="left:24.22px;top:774px;font-size:15.4px;color:#676767;transform:scaleX(.88);transform-origin:50% 50%;">13</span>
<span class="t" style="left:28.5px;top:112px;font-size:15.4px;color:#676767;transform:scaleX(.88);transform-origin:50% 50%;">1</span>
<div style="left:571px;top:65px;width:1px;height:712px;background:repeating-linear-gradient(to bottom,#b4b4b4 0 1px,transparent 1px 2px)"></div>
<div style="left:1375px;top:65px;width:1px;height:712px;background:repeating-linear-gradient(to bottom,#b4b4b4 0 1px,transparent 1px 2px)"></div>
<div style="left:478px;top:158px;width:990px;height:1px;background:repeating-linear-gradient(to right,#b4b4b4 0 1px,transparent 1px 2px)"></div>
<p class="t" style="left:571.9px;top:169px;font-size:16.67px;color:#000;letter-spacing:-0.283px;font-family:'Liberation Serif', serif;">[001]</p>
<p class="t" style="left:571.9px;top:188px;font-size:16.67px;color:#000;letter-spacing:-0.283px;font-family:'Liberation Serif', serif;">[002]</p>
<p class="t" style="left:571.9px;top:207px;font-size:16.67px;color:#000;letter-spacing:-0.283px;font-family:'Liberation Serif', serif;">[003]</p>
<p class="t" style="left:571.9px;top:226px;font-size:16.67px;color:#000;letter-spacing:-0.283px;font-family:'Liberation Serif', serif;">[004]</p>
<p class="t" style="left:571.9px;top:245px;font-size:16.67px;color:#000;letter-spacing:-0.283px;font-family:'Liberation Serif', serif;">[005]</p>
<p class="t" style="left:571.9px;top:264px;font-size:16.67px;color:#000;letter-spacing:-0.283px;font-family:'Liberation Serif', serif;">[006]</p>
<p class="t" style="left:571.9px;top:284px;font-size:16.67px;color:#000;letter-spacing:-0.283px;font-family:'Liberation Serif', serif;">[007]</p>
<p class="t" style="left:571.9px;top:303px;font-size:16.67px;color:#000;letter-spacing:-0.283px;font-family:'Liberation Serif', serif;">[008]</p>
<p class="t" style="left:571.9px;top:322px;font-size:16.67px;color:#000;letter-spacing:-0.283px;font-family:'Liberation Serif', serif;">[009]</p>
<p class="t" style="left:571.9px;top:341px;font-size:16.67px;color:#000;letter-spacing:-0.312px;font-family:'Liberation Serif', serif;">[0010]</p>
<p class="t" style="left:571.9px;top:360px;font-size:16.67px;color:#000;letter-spacing:-0.188px;font-family:'Liberation Serif', serif;">[0011]</p>
<p class="t" style="left:571.9px;top:379px;font-size:16.67px;color:#000;letter-spacing:-0.312px;font-family:'Liberation Serif', serif;">[0012]</p>
<div class="caret" style="left:619px;top:368.2px;width:2px;height:18.4px;background:#000"></div>
<div style="left:2px;top:368px;width:10px;height:54px;background:#fff;border:1px solid #8c8c8c;border-radius:2.5px"></div>
<svg class="ic" style="left:6px;top:393px" width="3" height="5" viewBox="0 0 3 5"><path d="M0 0L3 2.4L0 4.8Z" fill="#9a9a9a"/></svg>
<div style="left:1909px;top:368px;width:10px;height:54px;background:#fff;border:1px solid #8c8c8c;border-radius:2.5px"></div>
<svg class="ic" style="left:1911.6px;top:393px" width="3.4" height="5" viewBox="0 0 3.4 5"><path d="M3.4 0L0 2.5L3.4 5Z" fill="#9a9a9a"/></svg>
<div style="left:1893px;top:13px;width:15px;height:353px;background:#c9c9c9"></div>
<svg class="ic" style="left:0;top:0" width="1920" height="777" viewBox="0 201 1920 777"><path d="M1897.4 209.6L1900.6 206L1903.8 209.6" fill="none" stroke="#404040" stroke-width="2"/><path d="M1897.4 923.6L1900.6 927.4L1903.8 923.6" fill="none" stroke="#404040" stroke-width="2"/><path d="M1893.5 933.5H1907.5V978M1893.5 933.5V978M1893.5 947.5H1907.5M1893.5 963.5H1907.5M1893.5 977.6H1907.5" fill="none" stroke="#dadada" stroke-width="1"/><path d="M1897 940.4L1899.5 937.4L1902 940.4ZM1897 943.4L1899.5 940.6L1902 943.4Z" fill="#000"/><path d="M1896.6 940.6H1902.4" stroke="#000" stroke-width="0.8"/><circle cx="1899.4" cy="954.7" r="2.6" fill="#e0313a"/><path d="M1897 967.2L1899.5 970L1902 967.2ZM1897 970.2L1899.5 973.2L1902 970.2Z" fill="#000"/><path d="M1896.6 970H1902.4" stroke="#000" stroke-width="0.8"/></svg>
</div>
<div id="hscroll" style="left:0px;top:978px;width:1920px;height:14px;background:#f0f0f0">
<div style="left:0px;top:0px;width:1px;height:14px;background:#d2d2d2"></div>
<div style="left:13px;top:0px;width:15px;height:14px;background:#cbcbcb"></div>
<div style="left:1879px;top:0px;width:14.5px;height:14px;background:#cbcbcb"></div>
<svg class="ic" style="left:0;top:0" width="1920" height="14" viewBox="0 978 1920 14"><path d="M22.6 982L17.6 985.5L22.6 989" fill="none" stroke="#a6a6a6" stroke-width="2"/><path d="M1884 982L1889 985.5L1884 989" fill="none" stroke="#a6a6a6" stroke-width="2"/><path d="M1893.5 978V992M1907.5 978V992" stroke="#dadada" stroke-width="1"/></svg>
</div>
<div id="statusbar" style="left:0px;top:992px;width:1920px;height:28px;background:#f0f0f0">
<div style="left:0px;top:0px;width:1920px;height:1px;background:#bcbcbc"></div>
<div style="left:642px;top:5px;width:1px;height:18px;background:#b9b9b9"></div>
<div style="left:771px;top:5px;width:1px;height:18px;background:#b9b9b9"></div>
<div style="left:868px;top:5px;width:1px;height:18px;background:#b9b9b9"></div>
<div style="left:959px;top:5px;width:1px;height:18px;background:#b9b9b9"></div>
<div style="left:1107px;top:5px;width:1px;height:18px;background:#b9b9b9"></div>
<div style="left:1293px;top:5px;width:1px;height:18px;background:#b9b9b9"></div>
<div style="left:1468px;top:5px;width:1px;height:18px;background:#b9b9b9"></div>
<div style="left:1552px;top:5px;width:1px;height:18px;background:#b9b9b9"></div>
<span class="t" style="left:649px;top:14px;font-size:15.0px;color:#0a0a0a;letter-spacing:-0.449px;">L 12 Col 1</span>
<span class="t" style="left:778px;top:14px;font-size:15.0px;color:#0a0a0a;letter-spacing:-0.2px;">Section 1</span>
<span class="t" style="left:875.3px;top:14px;font-size:15.0px;color:#0a0a0a;letter-spacing:-0.291px;">Chapter 1</span>
<span class="t" style="left:965px;top:14px;font-size:15.0px;color:#0a0a0a;letter-spacing:-0.139px;">Page 1 of 1</span>
<span class="t" style="left:1113px;top:14px;font-size:15.0px;color:#0a0a0a;letter-spacing:0.022px;">English (United Kingdom)</span>
<span class="t" style="left:1301.5px;top:14px;font-size:15.0px;color:#0a0a0a;letter-spacing:-0.254px;">0 words</span>
<span class="t" style="left:1570.5px;top:14px;font-size:15.0px;color:#0a0a0a;letter-spacing:-0.505px;">Ins</span>
<span class="t" style="left:1848.4px;top:14px;font-size:15.0px;color:#0a0a0a;letter-spacing:-0.976px;">100%</span>
<div class="hl" style="left:1609px;top:2px;width:24px;height:24px;"></div>
<svg class="ic" style="left:0;top:0" width="1920" height="28" viewBox="0 992 1920 28"><rect x="1613.6" y="998.8" width="14.6" height="14.6" fill="#fff" stroke="#6a6a6a" stroke-width="1.1"/><path d="M1616 1002H1626" stroke="#8a8a8a" stroke-width="1"/><path d="M1616 1004.4H1626" stroke="#8a8a8a" stroke-width="1"/><path d="M1616 1006.8H1626" stroke="#8a8a8a" stroke-width="1"/><path d="M1616 1009.2H1626" stroke="#8a8a8a" stroke-width="1"/><path d="M1616 1011.4H1626" stroke="#8a8a8a" stroke-width="1"/><path d="M1640 1001.6H1652.4" stroke="#666" stroke-width="1.2"/><path d="M1640 1004.1H1652.4" stroke="#666" stroke-width="1.2"/><path d="M1640 1006.6H1652.4" stroke="#666" stroke-width="1.2"/><path d="M1640 1009.1H1652.4" stroke="#666" stroke-width="1.2"/><path d="M1640 1011.6H1652.4" stroke="#666" stroke-width="1.2"/><rect x="1663.6" y="998.8" width="14.8" height="14.6" fill="#fff" stroke="#6a6a6a" stroke-width="1.1"/><path d="M1666 1001.6H1676" stroke="#9a9a9a" stroke-width="1"/><path d="M1666 1010.8H1676" stroke="#9a9a9a" stroke-width="1"/><path d="M1692.4 1005.6H1698.6" stroke="#777" stroke-width="1.1"/><path d="M1705.6 1004.5H1816" stroke="#cfcfcf" stroke-width="1"/><path d="M1705.6 1005.4H1816" stroke="#fafafa" stroke-width="0.8"/><path d="M1760 999V1001M1760 1008.6V1010.6" stroke="#d0d0d0" stroke-width="1"/><circle cx="1760" cy="1004.8" r="4.4" fill="#fff" stroke="#7d7d7d" stroke-width="1"/><path d="M1822 1005.6H1828.8M1825.4 1002.2V1009" stroke="#777" stroke-width="1.1"/><path d="M1894 999.6L1896.6 1001.8L1894 1004M1897.6 999.6L1900.2 1001.8L1897.6 1004" fill="none" stroke="#555" stroke-width="1"/></svg>
</div>
</div>
</body>
</html>
